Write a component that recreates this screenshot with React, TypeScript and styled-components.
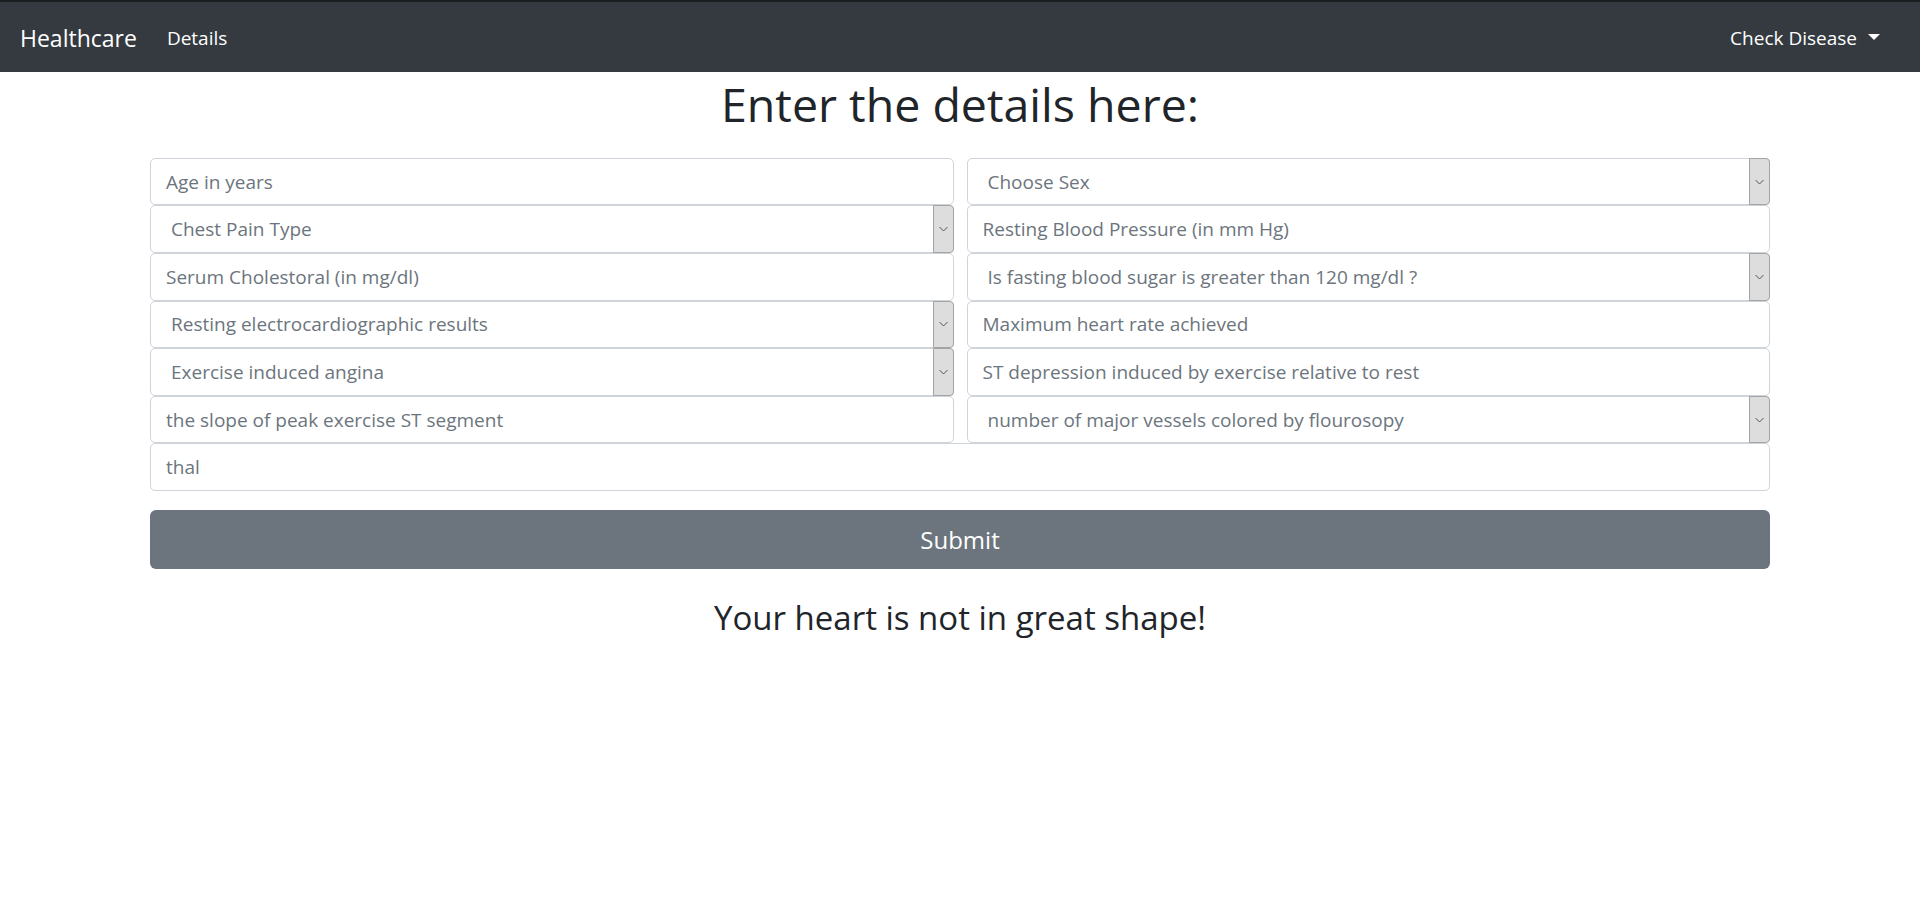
import React from "react";
import styled, { createGlobalStyle } from "styled-components";

const FONT = `"Open Sans", "Noto Sans", "Liberation Sans", sans-serif`;

const GlobalStyle = createGlobalStyle`
  html, body { margin: 0; padding: 0; background: #fff; }
  body { font-family: ${FONT}; color: #212529; }
  * { box-sizing: border-box; }
`;

const NavBar = styled.nav`
  height: 72px;
  background: #343a40;
  border-top: 2px solid #1b1e21;
  display: flex;
  align-items: center;
  padding: 2px 20px 0 20px;
`;

const Brand = styled.a`
  color: #fff;
  font-size: 23px;
  text-decoration: none;
  margin-right: 30px;
`;

const NavLink = styled.a<{ $push?: boolean }>`
  color: #fff;
  font-size: 19px;
  text-decoration: none;
  margin-left: ${(p) => (p.$push ? "auto" : "0")};
  display: flex;
  align-items: center;
  gap: 11px;
  padding-right: 20px;
`;

const Caret = styled.span`
  width: 0;
  height: 0;
  border-left: 6px solid transparent;
  border-right: 6px solid transparent;
  border-top: 6px solid #fff;
  margin-top: -2px;
`;

const Main = styled.main`
  width: 1620px;
  margin: 0 auto;
  display: flex;
  flex-direction: column;
`;

const Title = styled.h1`
  margin: 5px 0 25px;
  text-align: center;
  font-size: 46.5px;
  font-weight: 400;
  line-height: 1.2;
  color: #212529;
`;

const FormGrid = styled.form`
  display: grid;
  grid-template-columns: 1fr 1fr;
  column-gap: 13px;
  grid-auto-rows: 47.6px;
`;

const TextInput = styled.input<{ $wide?: boolean }>`
  grid-column: ${(p) => (p.$wide ? "1 / span 2" : "auto")};
  height: 100%;
  border: 1px solid #ced4da;
  border-radius: 5px;
  padding: 0 15px;
  font-family: ${FONT};
  font-size: 19px;
  color: #495057;
  background: #fff;
  outline: none;
  &::placeholder { color: #6c757d; opacity: 1; }
`;

const SelectFrame = styled.div`
  display: flex;
  height: 100%;
  border: 1px solid #ced4da;
  border-radius: 5px;
  background: #fff;
`;

const NativeSelect = styled.select`
  flex: 1;
  min-width: 0;
  appearance: none;
  -webkit-appearance: none;
  border: none;
  background: transparent;
  padding: 0 0 0 20px;
  font-family: ${FONT};
  font-size: 19px;
  color: #6c757d;
  outline: none;
`;

const ArrowBox = styled.span`
  width: 21px;
  margin: -1px -1px -1px 0;
  background: #dddddd;
  border: 1px solid #a3a3a3;
  border-radius: 0 4px 4px 0;
  display: flex;
  align-items: center;
  justify-content: center;
`;

const SubmitButton = styled.button`
  margin-top: 19px;
  height: 59px;
  border: none;
  border-radius: 6px;
  background: #6c757d;
  color: #fff;
  font-family: ${FONT};
  font-size: 24px;
`;

const Result = styled.h3`
  margin: 29px 0 0;
  text-align: center;
  font-size: 33px;
  font-weight: 400;
  line-height: 1.2;
  color: #212529;
`;

const Chevron = () => (
  <svg width="9" height="6" viewBox="0 0 9 6">
    <path d="M0.5 1 L4.5 5 L8.5 1" fill="none" stroke="#555" strokeWidth="1" />
  </svg>
);

const Select = ({ label }: { label: string }) => (
  <SelectFrame>
    <NativeSelect defaultValue="">
      <option value="" disabled>
        {label}
      </option>
    </NativeSelect>
    <ArrowBox>
      <Chevron />
    </ArrowBox>
  </SelectFrame>
);

export default function App() {
  return (
    <>
      <GlobalStyle />
      <NavBar>
        <Brand href="#">Healthcare</Brand>
        <NavLink href="#">Details</NavLink>
        <NavLink href="#" $push>
          Check Disease <Caret />
        </NavLink>
      </NavBar>
      <Main>
        <Title>Enter the details here:</Title>
        <FormGrid onSubmit={(e) => e.preventDefault()}>
          <TextInput placeholder="Age in years" />
          <Select label="Choose Sex" />
          <Select label="Chest Pain Type" />
          <TextInput placeholder="Resting Blood Pressure (in mm Hg)" />
          <TextInput placeholder="Serum Cholestoral (in mg/dl)" />
          <Select label="Is fasting blood sugar is greater than 120 mg/dl ?" />
          <Select label="Resting electrocardiographic results" />
          <TextInput placeholder="Maximum heart rate achieved" />
          <Select label="Exercise induced angina" />
          <TextInput placeholder="ST depression induced by exercise relative to rest" />
          <TextInput placeholder="the slope of peak exercise ST segment" />
          <Select label="number of major vessels colored by flourosopy" />
          <TextInput placeholder="thal" $wide />
        </FormGrid>
        <SubmitButton type="button">Submit</SubmitButton>
        <Result>Your heart is not in great shape!</Result>
      </Main>
    </>
  );
}
